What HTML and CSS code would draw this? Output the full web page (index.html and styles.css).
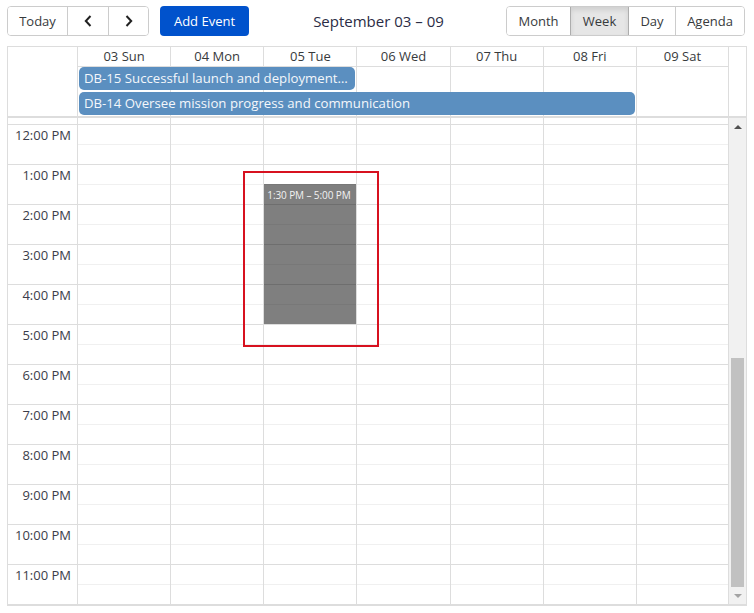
FILE: index.html
```html
<!DOCTYPE html>
<html lang="en">
<head>
<meta charset="utf-8">
<title>Calendar</title>
<link rel="stylesheet" href="styles.css">
</head>
<body>
<div class="toolbar">
  <div class="btn-group">
    <button class="btn today">Today</button>
    <button class="btn nav" aria-label="Previous"><svg width="8" height="12" viewBox="0 0 8 12"><polyline points="6.5,1 1.8,6 6.5,11" fill="none" stroke="#222" stroke-width="2"/></svg></button>
    <button class="btn nav next" aria-label="Next"><svg width="8" height="12" viewBox="0 0 8 12"><polyline points="1.5,1 6.2,6 1.5,11" fill="none" stroke="#222" stroke-width="2"/></svg></button>
  </div>
  <button class="btn primary">Add Event</button>
  <div class="title">September 03 – 09</div>
  <div class="btn-group views">
    <button class="btn v-month">Month</button>
    <button class="btn v-week active">Week</button>
    <button class="btn v-day">Day</button>
    <button class="btn v-agenda">Agenda</button>
  </div>
</div>

<div class="calendar">
  <div class="header">
    <div class="h-gutter"></div>
    <div class="h-label c2">03 Sun</div>
    <div class="h-label c3">04 Mon</div>
    <div class="h-label c4">05 Tue</div>
    <div class="h-label c5">06 Wed</div>
    <div class="h-label c6">07 Thu</div>
    <div class="h-label c7">08 Fri</div>
    <div class="h-label c8 last">09 Sat</div>
    <div class="h-bg c2"></div>
    <div class="h-bg c3"></div>
    <div class="h-bg c4"></div>
    <div class="h-bg c5"></div>
    <div class="h-bg c6"></div>
    <div class="h-bg c7"></div>
    <div class="h-bg c8 last"></div>
    <div class="allday ev-15">DB-15 Successful launch and deployment…</div>
    <div class="allday ev-14">DB-14 Oversee mission progress and communication</div>
  </div>

  <div class="tgrid">
    <div class="gutter">
      <div class="slot-partial"></div>
      <div class="hour">12:00 PM</div>
      <div class="hour">1:00 PM</div>
      <div class="hour">2:00 PM</div>
      <div class="hour">3:00 PM</div>
      <div class="hour">4:00 PM</div>
      <div class="hour">5:00 PM</div>
      <div class="hour">6:00 PM</div>
      <div class="hour">7:00 PM</div>
      <div class="hour">8:00 PM</div>
      <div class="hour">9:00 PM</div>
      <div class="hour">10:00 PM</div>
      <div class="hour">11:00 PM</div>
    </div>
    <div class="day c2"></div>
    <div class="day c3"></div>
    <div class="day c4"></div>
    <div class="day c5"></div>
    <div class="day c6"></div>
    <div class="day c7"></div>
    <div class="day c8 last"></div>
    <div class="event tue-event"><span class="ev-time">1:30 PM – 5:00 PM</span></div>
    <div class="scrollbar">
      <div class="sb-arrow up"><span class="tri-up"></span></div>
      <div class="sb-track"><div class="sb-thumb"></div></div>
      <div class="sb-arrow down"><span class="tri-down"></span></div>
    </div>
  </div>
</div>

<div class="highlight"></div>
</body>
</html>
```

FILE: styles.css
```css
* { box-sizing: border-box; }

html, body {
  margin: 0;
  padding: 0;
  background: #fff;
}

body {
  font-family: "Open Sans", "Noto Sans", "Liberation Sans", sans-serif;
  color: #373a3c;
  width: 754px;
  height: 613px;
  overflow: hidden;
  position: relative;
}

/* ---------- toolbar ---------- */
.toolbar {
  display: flex;
  align-items: center;
  height: 30px;
  margin: 6px 9px 0 7px;
}

.btn-group {
  display: flex;
  height: 30px;
  border: 1px solid #ccc;
  border-radius: 4px;
  overflow: hidden;
}

.btn {
  font-family: inherit;
  font-size: 13px;
  color: #373a3c;
  background: #fff;
  border: 0;
  padding: 0;
  margin: 0;
  height: 100%;
  display: flex;
  align-items: center;
  justify-content: center;
  cursor: pointer;
}

.btn-group .btn + .btn { border-left: 1px solid #ccc; }

.today { width: 59px; }
.nav { width: 41px; }
.nav.next { width: 40px; }

.primary {
  margin-left: 11px;
  width: 89px;
  height: 30px;
  background: #0052cc;
  color: #fff;
  border-radius: 4px;
}

.title {
  flex: 1;
  text-align: center;
  font-size: 15px;
  color: #2b2c45;
  padding-left: 2px;
}

.v-month { width: 63px; }
.v-week { width: 58px; }
.v-day { width: 47px; }
.v-agenda { width: 69px; }

.btn.active {
  background: #e6e6e6;
  box-shadow: inset 0 3px 5px rgba(0, 0, 0, 0.1);
}
.btn-group .btn.active,
.btn-group .btn.active + .btn { border-left-color: #adadad; }

/* ---------- calendar ---------- */
.calendar {
  margin: 10px 7px 0 7px;
  border: 1px solid #ddd;
  border-bottom-width: 2px;
}

.c2 { grid-column: 2; }
.c3 { grid-column: 3; }
.c4 { grid-column: 4; }
.c5 { grid-column: 5; }
.c6 { grid-column: 6; }
.c7 { grid-column: 7; }
.c8 { grid-column: 8; }

.header {
  display: grid;
  grid-template-columns: 69px repeat(7, 1fr) 17px;
  grid-template-rows: 20px 25px 24px;
  border-bottom: 2px solid #ddd;
  font-size: 13px;
}

.h-gutter {
  grid-column: 1;
  grid-row: 1 / 4;
}

.h-label {
  grid-row: 1;
  border-left: 1px solid #ddd;
  border-bottom: 1px solid #ddd;
  line-height: 19px;
  text-align: center;
  color: #373a3c;
  white-space: nowrap;
}
.h-label.last { border-right: 1px solid #ddd; }

.h-bg {
  grid-row: 2 / 4;
  border-left: 1px solid #ddd;
}
.h-bg.last { border-right: 1px solid #ddd; }

.allday {
  background: #5b8fc0;
  color: #f4f7fb;
  border-radius: 5px;
  font-size: 13.2px;
  line-height: 23px;
  height: 23px;
  padding: 0 5px;
  margin: 0 1px 0 2px;
  white-space: nowrap;
  overflow: hidden;
  text-overflow: ellipsis;
  align-self: start;
}
.ev-15 { grid-row: 2; grid-column: 2 / 5; }
.ev-14 { grid-row: 3; grid-column: 2 / 8; }

/* ---------- time grid ---------- */
.tgrid {
  display: grid;
  grid-template-columns: 69px repeat(7, 1fr) 17px;
  grid-template-rows: 6px repeat(24, 20px);
}

.gutter {
  grid-column: 1;
  grid-row: 1 / -1;
  display: grid;
  grid-template-rows: 6px repeat(12, 40px);
}

.hour {
  border-top: 1px solid #ddd;
  text-align: right;
  padding: 0 6px 0 0;
  font-size: 13px;
  line-height: 20px;
  color: #3b3d4a;
  white-space: nowrap;
}

.day {
  grid-row: 1 / -1;
  border-left: 1px solid #ddd;
  background-image: linear-gradient(to bottom,
      #ddd 0, #ddd 1px,
      transparent 1px, transparent 20px,
      #f0f0f0 20px, #f0f0f0 21px,
      transparent 21px);
  background-size: 100% 40px;
  background-position: 0 6px;
}
.day.last { border-right: 1px solid #ddd; }

.event {
  background: rgba(0, 0, 0, 0.5);
  color: #f2f2f2;
  margin-left: 1px;
  padding: 3px 3px 0 3px;
  font-size: 10px;
  line-height: 16px;
  letter-spacing: -0.1px;
  white-space: nowrap;
  overflow: hidden;
}
.tue-event {
  grid-column: 4;
  grid-row: 5 / 12;
}

.scrollbar {
  grid-column: 9;
  grid-row: 1 / -1;
  background: #f1f1f1;
  display: flex;
  flex-direction: column;
}

.sb-arrow {
  height: 17px;
  display: flex;
  align-items: center;
  justify-content: center;
}

.tri-up {
  width: 0;
  height: 0;
  border-left: 4px solid transparent;
  border-right: 4px solid transparent;
  border-bottom: 4px solid #505050;
}

.tri-down {
  width: 0;
  height: 0;
  border-left: 4px solid transparent;
  border-right: 4px solid transparent;
  border-top: 4px solid #a3a3a3;
}

.sb-track {
  flex: 1;
  display: flex;
  flex-direction: column;
  justify-content: flex-end;
  padding: 0 2px;
}

.sb-thumb {
  height: 229px;
  background: #c1c1c1;
}

/* ---------- annotation ---------- */
.highlight {
  position: absolute;
  left: 243px;
  top: 171px;
  width: 136px;
  height: 176px;
  border: 2px solid #d7111f;
  pointer-events: none;
}
```
